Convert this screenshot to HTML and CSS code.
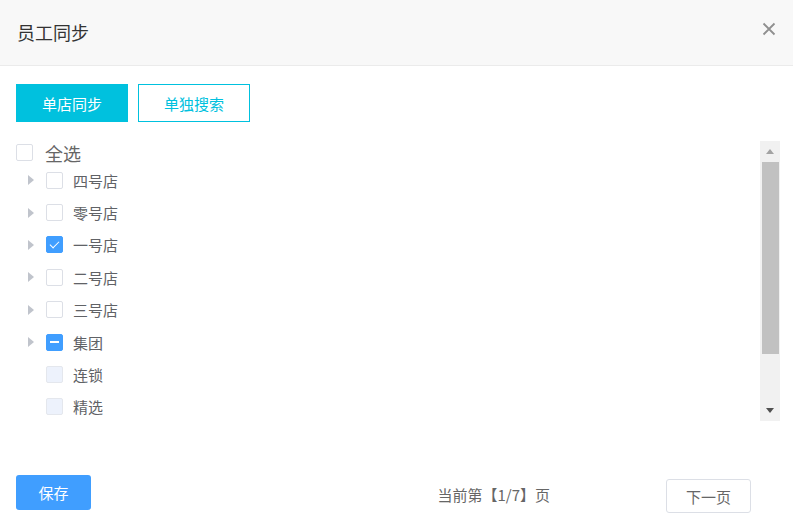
FILE: index.html
```html
<!DOCTYPE html>
<html lang="zh-CN">
<head>
  <meta charset="UTF-8">
  <meta name="viewport" content="width=device-width, initial-scale=1.0">
  <title>员工同步</title>
  <link rel="stylesheet" href="styles.css">
</head>
<body>

  <div class="dialog">
    <!-- 标题栏 -->
    <div class="dialog-header">
      <span class="dialog-title">员工同步</span>
      <button class="close-btn" aria-label="关闭">
        <svg width="14" height="14" viewBox="0 0 14 14">
          <path d="M1.5 1.5 L12.5 12.5 M12.5 1.5 L1.5 12.5" stroke="#909090" stroke-width="1.8" fill="none"/>
        </svg>
      </button>
    </div>

    <div class="dialog-body">
      <div class="tabs">
        <button class="tab active">单店同步</button>
        <button class="tab">单独搜索</button>
      </div>

      <div class="tree-box">
        <div class="tree">
          <div class="check-all">
            <span class="checkbox"></span>
            <span class="check-all-label">全选</span>
          </div>

          <div class="tree-node">
            <span class="arrow"></span>
            <span class="checkbox"></span>
            <span class="node-label">四号店</span>
          </div>
          <div class="tree-node">
            <span class="arrow"></span>
            <span class="checkbox"></span>
            <span class="node-label">零号店</span>
          </div>
          <div class="tree-node">
            <span class="arrow"></span>
            <span class="checkbox checked"></span>
            <span class="node-label">一号店</span>
          </div>
          <div class="tree-node">
            <span class="arrow"></span>
            <span class="checkbox"></span>
            <span class="node-label">二号店</span>
          </div>
          <div class="tree-node">
            <span class="arrow"></span>
            <span class="checkbox"></span>
            <span class="node-label">三号店</span>
          </div>
          <div class="tree-node">
            <span class="arrow"></span>
            <span class="checkbox half"></span>
            <span class="node-label">集团</span>
          </div>
          <div class="tree-node">
            <span class="arrow empty"></span>
            <span class="checkbox disabled"></span>
            <span class="node-label">连锁</span>
          </div>
          <div class="tree-node">
            <span class="arrow empty"></span>
            <span class="checkbox disabled"></span>
            <span class="node-label">精选</span>
          </div>
        </div>

        <!-- 滚动条 -->
        <div class="scrollbar">
          <span class="scroll-up"></span>
          <div class="scroll-track">
            <div class="scroll-thumb"></div>
          </div>
          <span class="scroll-down"></span>
        </div>
      </div>
    </div>

    <div class="dialog-footer">
      <button class="save-btn">保存</button>
      <span class="pager-text">当前第【1/7】页</span>
      <button class="next-btn">下一页</button>
    </div>
  </div>

</body>
</html>
```

FILE: styles.css
```css
:root {
  --cyan: #00c1de;
  --blue: #409eff;
  --text: #606266;
  --border: #dcdfe6;
}

body {
  margin: 0;
  font-family: "Microsoft YaHei", "Noto Sans CJK SC", sans-serif;
  background: #fff;
  color: var(--text);
}

button {
  font-family: inherit;
  cursor: pointer;
}

.dialog {
  width: 793px;
  height: 527px;
  display: flex;
  flex-direction: column;
}

.dialog-header {
  height: 65px;
  background: #f8f8f8;
  border-bottom: 1px solid #ebebeb;
  display: flex;
  align-items: center;
  justify-content: space-between;
  padding: 0 17px;
}

.dialog-title {
  font-size: 18px;
  color: #333;
  margin-top: -2px;
}

.close-btn {
  border: none;
  background: none;
  padding: 0;
  width: 14px;
  height: 14px;
  margin-top: -8px;
  margin-right: 0;
  display: flex;
}

.dialog-body {
  padding: 18px 13px 0 16px;
}

.tabs {
  display: flex;
  gap: 10px;
}

.tab {
  width: 112px;
  height: 38px;
  font-size: 15px;
  border: 1px solid var(--cyan);
  background: #fff;
  color: var(--cyan);
  padding: 0;
}

.tab.active {
  background: var(--cyan);
  color: #fff;
}

.tree-box {
  margin-top: 19px;
  height: 280px;
  display: flex;
}

.tree {
  flex: 1;
  overflow: hidden;
}

.check-all {
  height: 23px;
  display: flex;
  align-items: center;
}

.check-all-label {
  font-size: 18px;
  margin-left: 12px;
  color: #666;
}

.tree-node {
  height: 32.4px;
  display: flex;
  align-items: center;
  padding-left: 12px;
}

.arrow {
  width: 0;
  height: 0;
  border-left: 6px solid #c0c4cc;
  border-top: 5px solid transparent;
  border-bottom: 5px solid transparent;
  margin-right: 12px;
}

.arrow.empty {
  border-left-color: transparent;
}

.node-label {
  font-size: 15px;
  margin-left: 10px;
}

.checkbox {
  box-sizing: border-box;
  width: 17px;
  height: 17px;
  border: 1px solid var(--border);
  border-radius: 2px;
  background: #fff;
  position: relative;
  flex-shrink: 0;
}

.checkbox.checked,
.checkbox.half {
  background: var(--blue);
  border-color: var(--blue);
}

.checkbox.checked::after {
  content: "";
  position: absolute;
  left: 5px;
  top: 1.5px;
  width: 4px;
  height: 8px;
  border: solid #fff;
  border-width: 0 1.5px 1.5px 0;
  transform: rotate(45deg);
}

.checkbox.half::after {
  content: "";
  position: absolute;
  left: 3px;
  right: 3px;
  top: 6.5px;
  height: 2px;
  background: #fff;
}

.checkbox.disabled {
  background: #edf2fc;
  border-color: #e4e7ed;
}

.scrollbar {
  width: 20px;
  background: #f1f1f1;
  display: flex;
  flex-direction: column;
  align-items: center;
}

.scroll-up,
.scroll-down {
  height: 21px;
  display: flex;
  align-items: center;
  justify-content: center;
}

.scroll-up::before {
  content: "";
  border-bottom: 5px solid #a3a3a3;
  border-left: 4px solid transparent;
  border-right: 4px solid transparent;
}

.scroll-down::before {
  content: "";
  border-top: 5px solid #505050;
  border-left: 4px solid transparent;
  border-right: 4px solid transparent;
}

.scroll-track {
  flex: 1;
  width: 100%;
  display: flex;
  justify-content: center;
}

.scroll-thumb {
  width: 17px;
  height: 192px;
  background: #c1c1c1;
}

.dialog-footer {
  margin-top: auto;
  margin-bottom: 14px;
  display: flex;
  align-items: center;
  padding: 0 42px 0 16px;
}

.save-btn {
  width: 75px;
  height: 35px;
  border: none;
  border-radius: 3px;
  background: var(--blue);
  color: #fff;
  font-size: 15px;
  padding: 0;
}

.pager-text {
  margin-left: auto;
  margin-right: 116px;
  margin-top: 3px;
  font-size: 15px;
  color: #666;
}

.next-btn {
  width: 85px;
  height: 34px;
  margin-top: 7px;
  border: 1px solid var(--border);
  border-radius: 3px;
  background: #fff;
  color: #666;
  font-size: 15px;
  padding: 0;
}
```
